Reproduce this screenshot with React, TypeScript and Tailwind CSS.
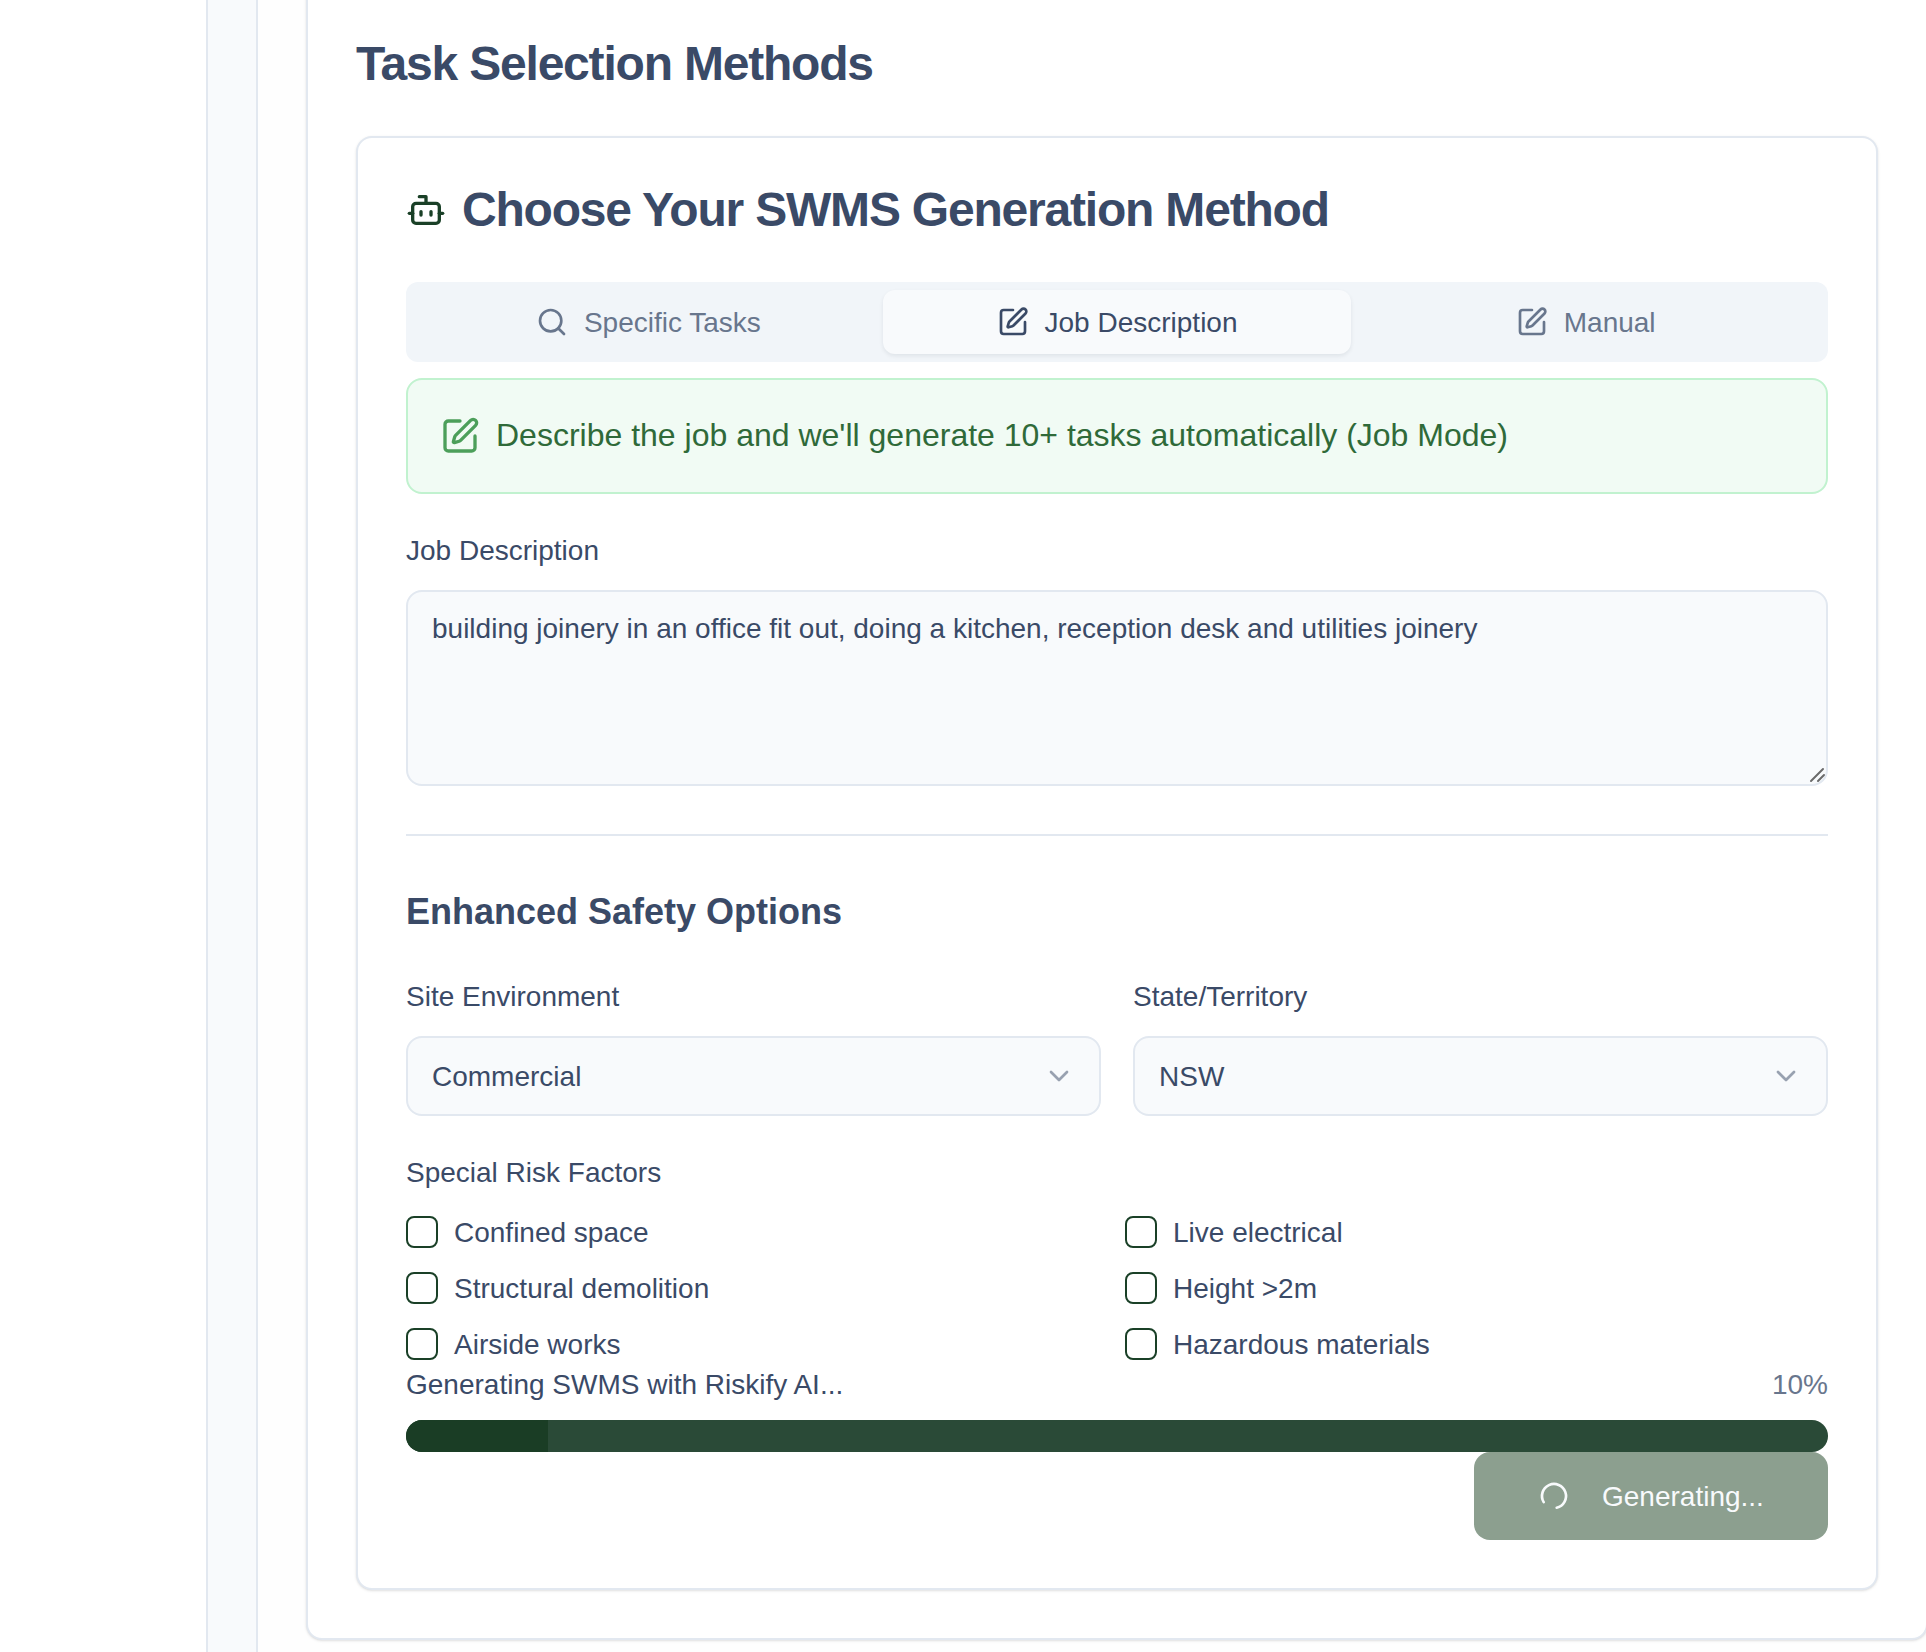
import { Bot, ChevronDown, Loader2, Search, SquarePen } from "lucide-react";

const ink = "text-[#3a4a67]";

function Field({ label, value }: { label: string; value: string }) {
  return (
    <div>
      <div className={`mb-5 h-10 text-[28px] leading-[42px] ${ink}`}>{label}</div>
      <div className={`flex h-20 items-center justify-between rounded-2xl border-2 border-[#e2e8f0] bg-[#f8fafc] px-6 text-[28px] ${ink}`}>
        <span className="pt-0.5">{value}</span>
        <ChevronDown size={32} strokeWidth={2} className="opacity-50" />
      </div>
    </div>
  );
}

function Check({ label }: { label: string }) {
  return (
    <div className="flex h-10 items-center gap-4">
      <span className="h-8 w-8 shrink-0 rounded-lg border-2 border-[#1a4027]" />
      <span className={`h-10 text-[28px] leading-[42px] ${ink}`}>{label}</span>
    </div>
  );
}

function Tab({ label, active, icon }: { label: string; active?: boolean; icon: "search" | "pen" }) {
  const Icon = icon === "search" ? Search : SquarePen;
  return (
    <div
      className={`flex h-16 flex-1 items-center justify-center gap-4 rounded-xl text-[28px] leading-[40px] ${
        active ? `bg-[#f8fafc] shadow-[0_2px_4px_rgba(15,23,42,0.08)] ${ink}` : "text-[#68768d]"
      }`}
    >
      <Icon size={32} strokeWidth={2} />
      <span className="pt-0.5">{label}</span>
    </div>
  );
}

export default function App() {
  return (
    <div className="flex h-[1652px] w-[1926px] overflow-hidden bg-white font-['Liberation_Sans',Arial,sans-serif]">
      <aside className="w-[208px] shrink-0 border-r-2 border-[#e2e8f0] bg-white" />
      <div className="w-[50px] shrink-0 border-r-2 border-[#e2e8f0] bg-[#f8fafc]" />
      <main className="min-w-0 flex-1 bg-[#fefefe] pl-12">
        <section className="-mt-[18px] w-[1622px] rounded-2xl border-2 border-[#e2e8f0] bg-white p-12 shadow-sm">
          <h1 className={`text-[48px] font-bold leading-[64px] tracking-[-1.2px] ${ink}`}>Task Selection Methods</h1>
          <div className="mt-10 rounded-2xl border-2 border-[#e2e8f0] bg-white p-12 shadow-sm">
            <div className="flex h-12 items-center gap-4">
              <Bot size={40} strokeWidth={2} className="shrink-0 text-[#1a4027]" />
              <h2 className={`text-[48px] font-bold leading-[48px] tracking-[-1.2px] ${ink}`}>Choose Your SWMS Generation Method</h2>
            </div>

            <div className="mt-12 flex h-20 items-center rounded-xl bg-[#f1f5f9] p-2">
              <Tab label="Specific Tasks" icon="search" />
              <Tab label="Job Description" icon="pen" active />
              <Tab label="Manual" icon="pen" />
            </div>

            <div className="mt-4 flex h-[116px] items-center gap-4 rounded-2xl border-2 border-[#c1f2cf] bg-[#f1fbf4] px-8">
              <SquarePen size={40} strokeWidth={2} className="shrink-0 text-[#4c9f5a]" />
              <span className="pb-0.5 text-[32px] leading-[48px] text-[#2f6a39]">
                Describe the job and we'll generate 10+ tasks automatically (Job Mode)
              </span>
            </div>

            <div className={`mt-9 h-10 text-[28px] leading-[42px] ${ink}`}>Job Description</div>
            <div className="relative mt-5">
              <textarea
                readOnly
                defaultValue="building joinery in an office fit out, doing a kitchen, reception desk and utilities joinery"
                className={`block h-[196px] w-full resize-none rounded-2xl border-2 border-[#e2e8f0] bg-[#f8fafc] px-6 pt-[17px] pb-4 text-[28px] leading-[40px] ${ink} outline-none`}
              />
              <svg className="absolute bottom-0 right-0" width="20" height="20" viewBox="0 0 20 20" fill="none" stroke="#6b6b6b" strokeWidth="2" strokeLinecap="round">
                <path d="M3 15 15 3" />
                <path d="M10 15l6-6" />
              </svg>
            </div>

            <div className="mt-12 h-0.5 bg-[#e2e8f0]" />

            <h3 className={`mt-12 text-[36px] font-bold leading-[56px] ${ink}`}>Enhanced Safety Options</h3>

            <div className="mt-9 grid grid-cols-2 gap-8">
              <Field label="Site Environment" value="Commercial" />
              <Field label="State/Territory" value="NSW" />
            </div>

            <div className={`mt-[37px] text-[28px] leading-[40px] ${ink}`}>Special Risk Factors</div>
            <div className="mt-[19px] grid grid-cols-2 gap-4">
              <Check label="Confined space" />
              <Check label="Live electrical" />
              <Check label="Structural demolition" />
              <Check label="Height >2m" />
              <Check label="Airside works" />
              <Check label="Hazardous materials" />
            </div>

            <div className="flex h-10 justify-between text-[28px] leading-[42px]">
              <span className={ink}>Generating SWMS with Riskify AI...</span>
              <span className="text-[#68768d]">10%</span>
            </div>
            <div className="mt-4 h-8 overflow-hidden rounded-full bg-[#2a4a37]">
              <div className="h-full bg-[#1a3d25]" style={{ width: "10%" }} />
            </div>
            <div className="flex justify-end">
              <div className="flex h-[88px] w-[354px] items-center gap-8 rounded-2xl bg-[#8c9f8f] px-16 text-[28px] text-[#f8fafc]">
                <Loader2 size={32} strokeWidth={2} className="shrink-0 rotate-[149deg]" />
                <span className="pt-0.5">Generating...</span>
              </div>
            </div>
          </div>
        </section>
      </main>
    </div>
  );
}
